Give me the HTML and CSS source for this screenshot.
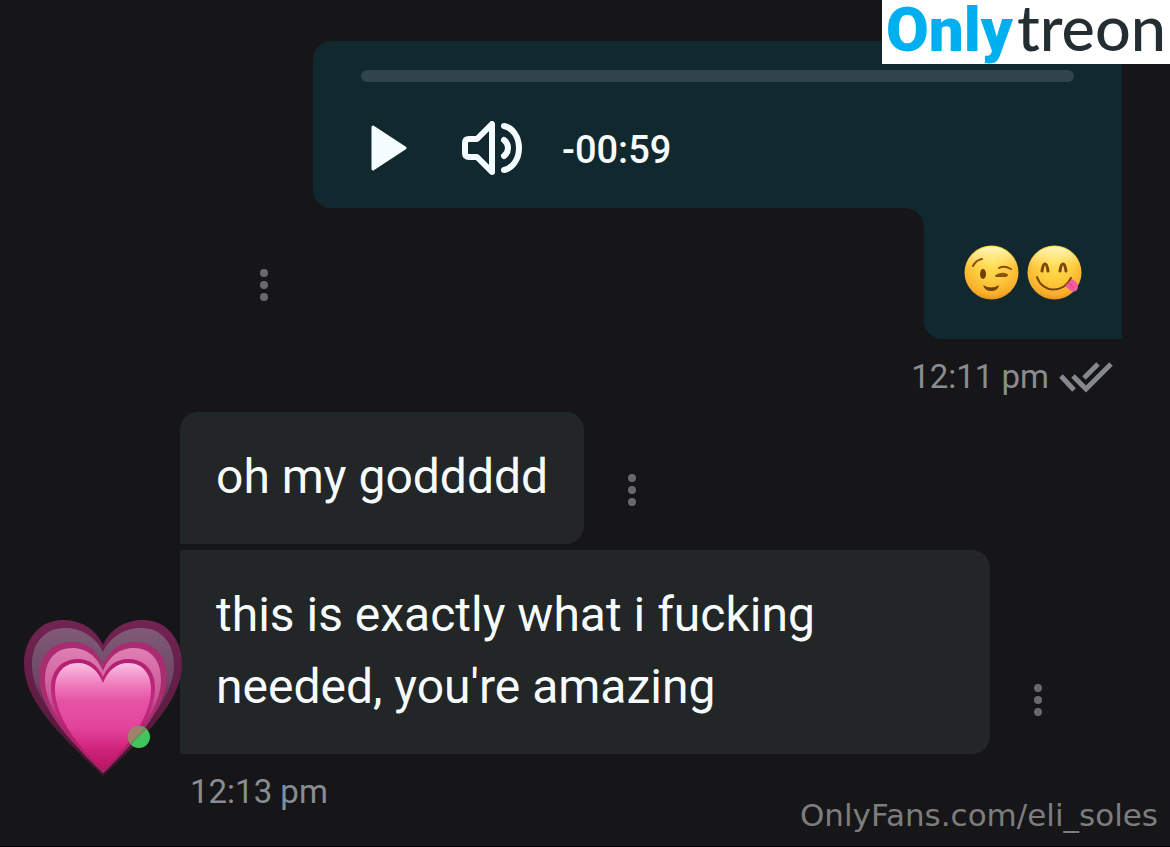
FILE: index.html
```html
<!DOCTYPE html>
<html lang="en">
  <head>
    <meta charset="UTF-8" />
    <meta name="viewport" content="width=device-width, initial-scale=1" />
    <title>Messages</title>
    <link rel="stylesheet" href="styles.css">
  </head>
  <body>
    <a class="logo" href="#"><span class="logo-only">Only</span><span class="logo-treon">treon</span></a>

    <main class="chat">
      <section class="sent">
        <div class="sent-row">
          <button class="more" type="button" aria-label="Message options"><i></i><i></i><i></i></button>
          <div class="sent-bubbles">
            <div class="audio">
              <input class="track" type="range" min="0" max="59" value="0" aria-label="Seek" />
              <div class="controls">
                <button class="play" type="button" aria-label="Play">
                  <svg width="37" height="46" viewBox="0 0 37 46">
                    <path d="M2 2 L34 23 L2 44 Z" fill="#f4fcff" stroke="#f4fcff" stroke-width="3" stroke-linejoin="round" />
                  </svg>
                </button>
                <button class="volume" type="button" aria-label="Volume">
                  <svg width="60" height="54" viewBox="0 0 60 54" fill="none" stroke="#f4fcff" stroke-width="6" stroke-linecap="round" stroke-linejoin="round">
                    <path d="M30 3 V51 L15 36 H7 Q3 36 3 32 V22 Q3 18 7 18 H15 Z" />
                    <path d="M42 19 Q46 22 46 27 T42 35" />
                    <path d="M42 5 C51 7 57 16 57 27 C57 38 51 47 42 49" />
                  </svg>
                </button>
                <span class="remaining">-00:59</span>
              </div>
            </div>
            <div class="emoji-bubble">
              <svg width="55" height="55" viewBox="0 0 55 55" role="img" aria-label="Winking face">
                <defs>
                  <radialGradient id="face" cx="0.5" cy="0.3" r="0.72">
                    <stop offset="0" stop-color="#ffe25a" />
                    <stop offset="0.5" stop-color="#fdcb3d" />
                    <stop offset="0.85" stop-color="#f9ae2b" />
                    <stop offset="1" stop-color="#e58a18" />
                  </radialGradient>
                  <linearGradient id="shine" x1="0" y1="0" x2="0" y2="1">
                    <stop offset="0" stop-color="#fffbd0" stop-opacity="0.9" />
                    <stop offset="0.4" stop-color="#fff3a0" stop-opacity="0" />
                  </linearGradient>
                </defs>
                <circle cx="27.500" cy="27.500" r="27" fill="url(#face)" />
                <circle cx="27.500" cy="27.500" r="26" fill="url(#shine)" />
                <ellipse cx="19" cy="29" rx="3" ry="5" fill="#70400b" />
                <g fill="none" stroke="#8a500d" stroke-width="2" stroke-linecap="round">
                  <path d="M9 21 Q12 15 18 14" />
                  <path d="M35 23 Q40 20 47 24" />
                  <path d="M32 31 Q37 27 43 30 M33 31 H42" />
                </g>
                <path d="M19 40 Q27 45 35 40 Q34 46 27 46 Q21 46 19 40 Z" fill="#70400b" />
              </svg>
              <svg width="55" height="55" viewBox="0 0 55 55" role="img" aria-label="Face savouring food">
                <circle cx="27.500" cy="27.500" r="27" fill="url(#face)" />
                <circle cx="27.500" cy="27.500" r="26" fill="url(#shine)" />
                <g fill="none" stroke="#7b450b" stroke-linecap="round">
                  <path d="M15 26 Q16 19 18 19 Q20 19 21 26 M33 26 Q34 19 36 19 Q38 19 39 26" stroke-width="3" />
                  <path d="M10 32 C15 48 36 49 44 33" stroke-width="2" />
                </g>
                <path d="M45 34 Q51 37 51 42 Q50 48 44 46 L38 41 Z" fill="#f35aa0" />
                <path d="M42 38 L47 43" stroke="#d63c85" stroke-width="1" />
              </svg>
            </div>
          </div>
        </div>
        <div class="time">
          12:11 pm
          <svg width="54" height="32" viewBox="0 0 54 32" fill="none" stroke="#85888f" stroke-width="5" role="img" aria-label="Read">
            <path d="M2 15 L15 29" />
            <path d="M14 15 L27 28 L52 3" />
            <path d="M25 17 L39 3" />
          </svg>
        </div>
      </section>

      <section class="received">
        <div class="received-row">
          <svg class="avatar" width="158" height="158" viewBox="0 0 158 158" role="img" aria-label="Growing heart, online">
            <defs>
              <linearGradient id="haze" x1="0" y1="0" x2="0" y2="1">
                <stop offset="0" stop-color="#805b77" />
                <stop offset="0.35" stop-color="#6e4967" />
                <stop offset="0.65" stop-color="#571b40" />
                <stop offset="1" stop-color="#4a1432" />
              </linearGradient>
              <linearGradient id="edge" x1="0" y1="0" x2="0" y2="1">
                <stop offset="0" stop-color="#722452" />
                <stop offset="0.6" stop-color="#5c1c41" />
                <stop offset="1" stop-color="#48142f" />
              </linearGradient>
              <linearGradient id="mid" x1="0" y1="0" x2="0" y2="1">
                <stop offset="0" stop-color="#e080b4" />
                <stop offset="0.4" stop-color="#c95596" />
                <stop offset="0.65" stop-color="#a3206b" />
                <stop offset="1" stop-color="#8c164f" />
              </linearGradient>
              <linearGradient id="ring" x1="0" y1="0" x2="0" y2="1">
                <stop offset="0" stop-color="#b51e70" />
                <stop offset="0.4" stop-color="#c22a80" />
                <stop offset="1" stop-color="#b5155f" />
              </linearGradient>
              <linearGradient id="core" x1="0" y1="0" x2="0" y2="1">
                <stop offset="0" stop-color="#fbc0e4" />
                <stop offset="0.2" stop-color="#ee7dbd" />
                <stop offset="0.35" stop-color="#e554a4" />
                <stop offset="0.6" stop-color="#e2459b" />
                <stop offset="0.8" stop-color="#d0237c" />
                <stop offset="1" stop-color="#b8165f" />
              </linearGradient>
              <clipPath id="dot"><circle cx="115" cy="119" r="11" /></clipPath>
            </defs>
            <path fill="url(#edge)" d="M79 27 C87 9 104 2 119 2 C143 2 158 22 158 46 C158 86 116 122 79 158 C42 122 0 86 0 46 C0 22 15 2 39 2 C54 2 71 9 79 27 Z" />
            <path fill="url(#haze)" d="M79 34 C87 17 103 10 117 10 C138 10 150 26 150 47 C150 82 114 118 79 153 C44 118 8 82 8 47 C8 26 20 10 41 10 C55 10 71 17 79 34 Z" />
            <path fill="#a92c70" d="M79 47 C86 29 99 24 111 24 C132 24 143 40 143 60 C143 90 111 124 79 155 C47 124 15 90 15 60 C15 40 26 24 47 24 C59 24 72 29 79 47 Z" />
            <path fill="url(#mid)" d="M79 53 C86 36 98 30 110 30 C128 30 137 44 137 62 C137 91 110 124 79 153 C48 124 21 91 21 62 C21 44 30 30 48 30 C60 30 72 36 79 53 Z" />
            <path fill="url(#ring)" d="M79 59 C84 47 93 41 104 41 C121 41 131 53 131 70 C131 98 107 127 79 153 C51 127 27 98 27 70 C27 53 37 41 54 41 C65 41 74 47 79 59 Z" />
            <path fill="url(#core)" d="M79 65 C84 52 93 45 104 45 C119 45 127 56 127 71 C127 98 106 126 79 152 C52 126 31 98 31 71 C31 56 39 45 54 45 C65 45 74 52 79 65 Z" />
            <g clip-path="url(#dot)">
              <rect x="104" y="108" width="22" height="22" fill="#3fc65e" />
              <path d="M100 104 H130 L104 130 Z" fill="#a1806c" />
              <path d="M125 106 L103 130" stroke="#5f9a55" stroke-width="2" />
            </g>
          </svg>
          <div class="bubbles">
            <div class="message">
              <p class="bubble">oh my goddddd</p>
              <button class="more" type="button" aria-label="Message options"><i></i><i></i><i></i></button>
            </div>
            <div class="message">
              <p class="bubble last">this is exactly what i fucking needed, you're amazing</p>
              <button class="more" type="button" aria-label="Message options"><i></i><i></i><i></i></button>
            </div>
          </div>
        </div>
        <div class="time">12:13 pm</div>
      </section>
    </main>

    <div class="watermark">OnlyFans.com/eli_soles</div>
  </body>
</html>
```
FILE: styles.css
```css
* {
  box-sizing: border-box;
}

body {
  position: relative;
  margin: 0;
  min-height: 100vh;
  background: #161618;
  border-bottom: 1px solid #000;
  color: #f7fbfc;
  font-family: Roboto, "Liberation Sans", sans-serif;
}

button {
  padding: 0;
  border: none;
  background: none;
  cursor: pointer;
}

svg {
  display: block;
}

.chat {
  padding-top: 41px;
}

/* logo in the top right corner */
.logo {
  position: absolute;
  top: 0;
  right: 0;
  z-index: 1;
  display: flex;
  align-items: baseline;
  justify-content: center;
  gap: 4px;
  width: 288px;
  height: 64px;
  background: #fff;
  line-height: 54px;
  text-decoration: none;
}

.logo-only {
  color: #00aff0;
  font-size: 62px;
  font-weight: 900;
}

.logo-treon {
  color: #242e32;
  font-family: Lato, sans-serif;
  font-size: 63px;
  font-weight: 500;
}

/* three dots next to a message */
.more {
  display: flex;
  flex: none;
  flex-direction: column;
  align-items: center;
  gap: 4px;
  width: 14px;
  margin-bottom: 38px;
}

.more i {
  width: 8px;
  height: 8px;
  border-radius: 50%;
  background: #68696c;
}

.sent {
  padding: 0 48px 0 257px;
}

.sent-row {
  display: flex;
  align-items: flex-end;
  gap: 42px;
}

.sent-bubbles {
  display: flex;
  flex: 1;
  flex-direction: column;
  align-items: flex-end;
}

.audio {
  width: 100%;
  padding: 29px 48px 30px;
  border-radius: 18px 18px 0 18px;
  background: #11282e;
}

.track {
  display: block;
  width: 100%;
  height: 12px;
  margin: 0;
  border-radius: 6px;
  background: #30444b;
  appearance: none;
}

.track::-webkit-slider-thumb {
  width: 12px;
  height: 12px;
  background: transparent;
  appearance: none;
}

.controls {
  display: flex;
  align-items: center;
  height: 60px;
  margin-top: 36px;
  padding-left: 10px;
}

.volume {
  margin: 0 40px 0 54px;
}

.remaining {
  padding-top: 4px;
  font-size: 38px;
  font-weight: 500;
}

.emoji-bubble {
  position: relative;
  display: flex;
  align-items: center;
  gap: 8px;
  height: 131px;
  padding: 0 40px 2px;
  border-radius: 0 0 0 18px;
  background: #11282e;
}

/* inner corner where the two bubbles meet */
.emoji-bubble::before {
  content: "";
  position: absolute;
  top: 0;
  right: 100%;
  width: 18px;
  height: 18px;
  background: radial-gradient(circle at 0 100%, transparent 17px, #11282e 18px);
}

.time {
  display: flex;
  align-items: center;
  gap: 10px;
  margin-top: 18px;
  color: #898c92;
  font-size: 33px;
  line-height: 40px;
}

.sent .time {
  justify-content: flex-end;
  padding-right: 9px;
}

.received {
  padding: 15px 48px 0 24px;
}

.received-row {
  display: flex;
  align-items: flex-end;
}

.avatar {
  position: relative;
  flex: none;
  margin: 0 -2px -22px 0;
}

.bubbles {
  display: flex;
  flex: 1;
  flex-direction: column;
  gap: 6px;
}

.message {
  display: flex;
  align-items: flex-end;
  gap: 41px;
}

.bubble {
  max-width: 810px;
  margin: 0;
  padding: 29px 36px 31px;
  border-radius: 18px 18px 18px 0;
  background: #222627;
  font-size: 48px;
  line-height: 72px;
}

.bubble.last {
  border-radius: 0 18px 18px 0;
}

.received .time {
  padding-left: 166px;
}

.watermark {
  position: absolute;
  right: 12px;
  bottom: 13px;
  color: #7d7d7e;
  font-family: "DejaVu Sans", sans-serif;
  font-size: 31px;
  line-height: 36px;
}
```
